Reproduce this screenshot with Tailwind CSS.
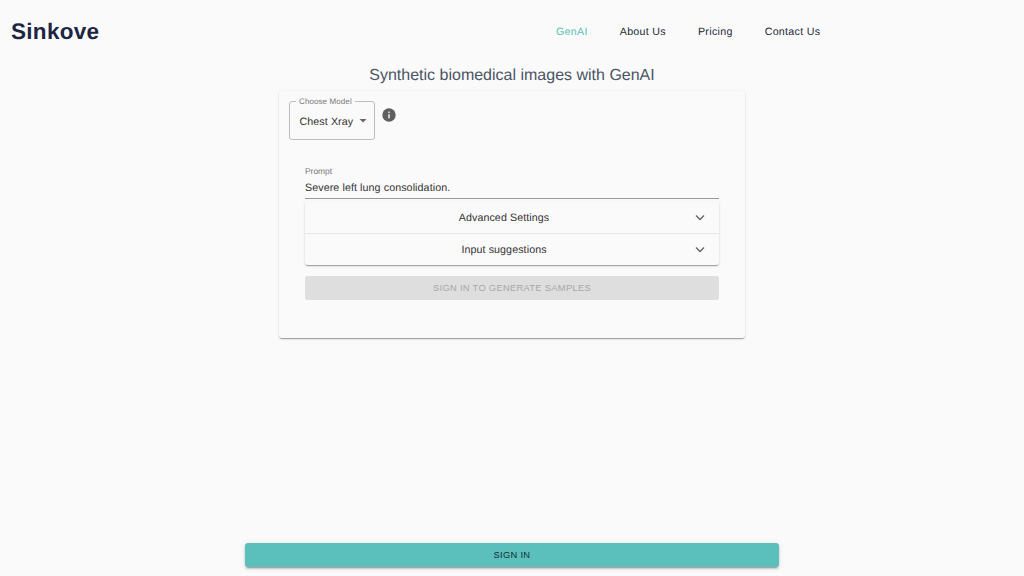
<!doctype html>
<html>
<head>
<meta charset="utf-8">
<script src="https://cdn.jsdelivr.net/npm/@tailwindcss/browser@4"></script>
</head>
<body class="m-0 bg-[#fafafb] font-['Liberation_Sans',Arial,sans-serif] text-[#1f2937] [text-rendering:geometricPrecision]">
<div class="relative flex h-[576px] w-[1024px] flex-col overflow-hidden">
  <header class="flex h-[64px] shrink-0 items-center pl-[11px]">
    <div class="w-[88px] text-[22.5px] leading-[28px] font-bold tracking-[0.3px] whitespace-nowrap text-[#1e2542]">Sinkove</div>
    <nav class="ml-[457px] flex items-center gap-[32px] text-[10.67px] leading-[15px] tracking-[0.3px] text-[#1f2937]">
      <a class="text-[#5bbfbb]">GenAI</a>
      <a>About Us</a>
      <a>Pricing</a>
      <a>Contact Us</a>
    </nav>
  </header>
  <main class="flex flex-1 flex-col items-center">
    <h1 class="text-[16px] leading-[24px] font-normal text-[#4b5563]">Synthetic biomedical images with GenAI</h1>
    <section class="mt-[3px] h-[247px] w-[466px] rounded-[3px] bg-[#fafafa] shadow-[0_2px_1px_-1px_rgba(0,0,0,0.2),0_1px_1px_0_rgba(0,0,0,0.14),0_1px_3px_0_rgba(0,0,0,0.12)]">
      <div class="flex items-start pt-[10px] pl-[10px]">
        <div class="relative flex h-[39px] w-[86px] items-center rounded-[3px] border border-[#bdbdbd] pt-[3px] pl-[9.5px] text-[10.67px] text-[#333333]">
          <span class="absolute top-[-6px] left-[6px] bg-[#fafafa] px-[3px] text-[8px] leading-[11px] tracking-[0.1px] text-[#777777]">Choose Model</span>
          <span class="tracking-[0.1px]">Chest Xray</span>
          <svg class="absolute top-[17px] right-[7.5px]" width="8" height="4" viewBox="0 0 8 4"><path d="M0.5 0h7L4 3.5z" fill="#666666"/></svg>
        </div>
        <svg class="mt-[7px] ml-[7px]" width="14" height="14" viewBox="0 0 14 14">
          <circle cx="7" cy="7" r="6.7" fill="#5f5f5f"/>
          <rect x="6.3" y="6.2" width="1.4" height="4.2" fill="#fafafa"/>
          <rect x="6.3" y="3.6" width="1.4" height="1.4" fill="#fafafa"/>
        </svg>
      </div>
      <div class="mx-[26px] mt-[26px]">
        <div class="text-[8.4px] leading-[11px] text-[#777777]">Prompt</div>
        <div class="mt-[4px] h-[18px] border-b border-[#999999] text-[10.67px] leading-[14px] tracking-[0.1px] text-[#333333]">Severe left lung consolidation.</div>
        <div class="mt-[3px] rounded-b-[3px] bg-[#fafafa] shadow-[0_2px_1px_-1px_rgba(0,0,0,0.2),0_1px_1px_0_rgba(0,0,0,0.14),0_1px_3px_0_rgba(0,0,0,0.12)]">
          <div class="flex h-[32px] items-center border-b border-[#e8e8e8]">
            <span class="flex-1 pl-[9px] text-center text-[10.67px] tracking-[0.1px] text-[#333333]">Advanced Settings</span>
            <svg class="mr-[13px]" width="12" height="8" viewBox="0 0 12 8"><path d="M2 1.5l4 4 4-4" fill="none" stroke="#666666" stroke-width="1.4"/></svg>
          </div>
          <div class="flex h-[31px] items-center">
            <span class="flex-1 pl-[9px] text-center text-[10.67px] tracking-[0.1px] text-[#333333]">Input suggestions</span>
            <svg class="mr-[13px]" width="12" height="8" viewBox="0 0 12 8"><path d="M2 1.5l4 4 4-4" fill="none" stroke="#666666" stroke-width="1.4"/></svg>
          </div>
        </div>
        <button class="mt-[11px] block h-[24px] w-full rounded-[3px] bg-[#dedede] pt-[1px] text-center text-[9.33px] tracking-[0.3px] text-[#a8a8a8]">SIGN IN TO GENERATE SAMPLES</button>
      </div>
    </section>
    <div class="flex-1"></div>
    <button class="mb-[9px] h-[24px] w-[534px] rounded-[3px] bg-[#5bbfbb] pt-[1px] text-center text-[9.33px] tracking-[0.3px] text-[#12303a] shadow-[0_3px_1px_-2px_rgba(0,0,0,0.2),0_2px_2px_0_rgba(0,0,0,0.14),0_1px_5px_0_rgba(0,0,0,0.12)]">SIGN IN</button>
  </main>
</div>
</body>
</html>
